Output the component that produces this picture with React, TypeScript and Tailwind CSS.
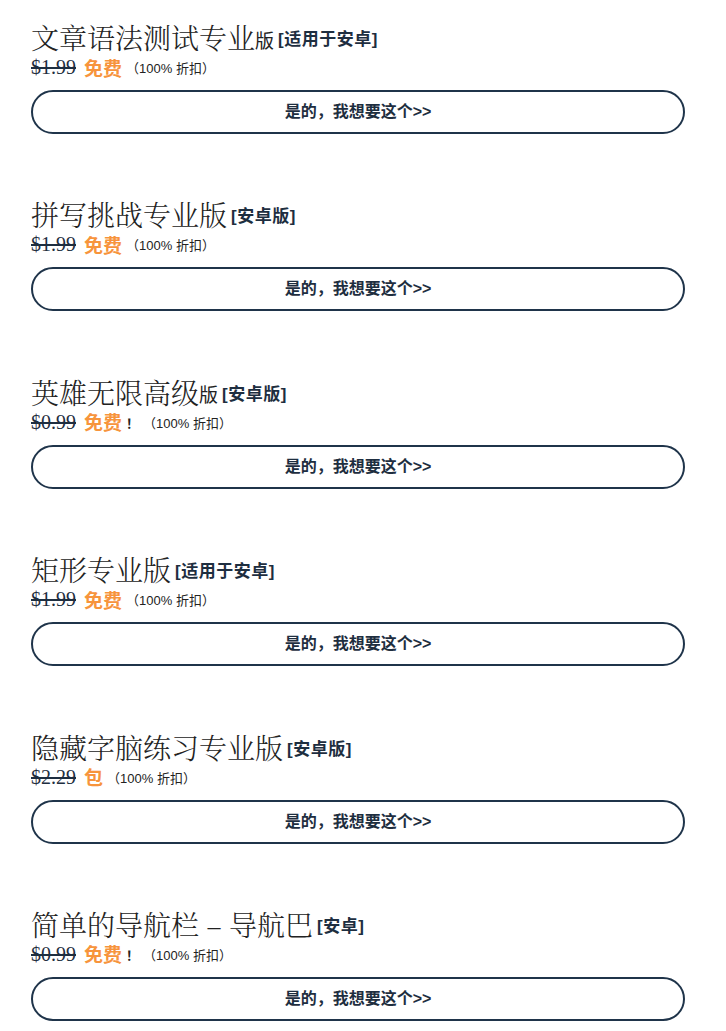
import React from "react";

type Offer = {
  title: string;
  small?: string;
  tag: string;
  price: string;
  deal: string;
  bang?: boolean;
};

const offers: Offer[] = [
  { title: "文章语法测试专业", small: "版", tag: "[适用于安卓]", price: "$1.99", deal: "免费" },
  { title: "拼写挑战专业版", tag: "[安卓版]", price: "$1.99", deal: "免费" },
  { title: "英雄无限高级", small: "版", tag: "[安卓版]", price: "$0.99", deal: "免费", bang: true },
  { title: "矩形专业版", tag: "[适用于安卓]", price: "$1.99", deal: "免费" },
  { title: "隐藏字脑练习专业版", tag: "[安卓版]", price: "$2.29", deal: "包" },
  { title: "简单的导航栏 – 导航巴", tag: "[安卓]", price: "$0.99", deal: "免费", bang: true },
];

function OfferItem({ offer }: { offer: Offer }) {
  return (
    <div className="mb-[61.4px]">
      <div className="h-[38px] flex items-center whitespace-nowrap text-[#222222] leading-none">
        <span className="text-[28px] font-light font-[family-name:'Noto_Serif_CJK_SC','Noto_Sans_CJK_SC',serif]">
          {offer.title}
        </span>
        {offer.small && (
          <span className="mt-[4px] text-[19px] font-[family-name:'Noto_Sans_CJK_SC',serif]">{offer.small}</span>
        )}
        <span className="ml-[4px] mt-[5px] text-[17px] font-semibold tracking-[0.5px] text-[#1e2e40] font-[family-name:'Liberation_Sans','Noto_Sans_CJK_SC',sans-serif]">
          {offer.tag}
        </span>
      </div>
      <div className="h-[22px] leading-none flex items-center whitespace-nowrap">
        <span className="text-[20px] text-[#1e2e40] line-through decoration-[1.5px] font-[family-name:'Liberation_Serif',serif]">
          {offer.price}
        </span>
        <span className="ml-[8px] text-[19px] font-bold text-[#f7943c] font-[family-name:'Noto_Sans_CJK_SC',serif]">
          {offer.deal}
        </span>
        {offer.bang && (
          <span className="ml-[4px] mt-[2px] text-[13px] font-bold text-[#222222] font-[family-name:'Noto_Sans_CJK_SC',sans-serif]">！</span>
        )}
        <span className="ml-[4px] mt-[3px] text-[13px] text-[#222222] font-[family-name:'Liberation_Sans','Noto_Sans_CJK_SC',sans-serif]">
          （100% 折扣）
        </span>
      </div>
      <button className="mt-[12px] w-full h-[44px] rounded-full border-2 border-[#1f344a] bg-white text-[16px] font-bold text-[#1e2e40] font-[family-name:'Liberation_Sans','Noto_Sans_CJK_SC',sans-serif]">
        是的，我想要这个&gt;&gt;
      </button>
    </div>
  );
}

export default function App() {
  return (
    <div className="bg-white min-h-screen pt-[18px] pl-[31px] pr-[41px]">
      {offers.map((o, i) => (
        <OfferItem key={i} offer={o} />
      ))}
    </div>
  );
}
